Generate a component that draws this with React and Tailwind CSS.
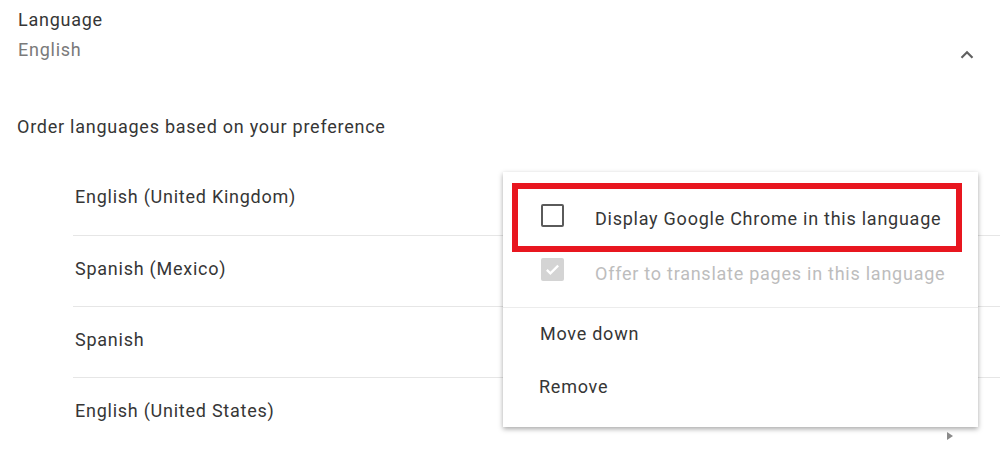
import React from 'react';

const languages = ['English (United Kingdom)', 'Spanish (Mexico)', 'Spanish', 'English (United States)'];

const App = () => {
  return (
    <div className="relative w-[1000px] h-[452px] overflow-hidden bg-white text-[18px] tracking-[0.75px] text-[#363636] font-['Roboto',sans-serif]">
      <div className="flex justify-between pl-[18px] pr-[22px] pt-[8px]">
        <div>
          <div className="leading-[24px]">Language</div>
          <div className="leading-[24px] mt-[6px] text-[#7a7a7a]">English</div>
        </div>
        <svg className="mt-[36px]" width="22" height="22" viewBox="0 0 24 24">
          <path d="M6 15l6-6 6 6" fill="none" stroke="#616161" strokeWidth="2.4" />
        </svg>
      </div>

      <div className="pl-[17px] mt-[49px] leading-[24px]">Order languages based on your preference</div>

      <div className="ml-[73px] mt-[25px]">
        {languages.map((lang, i) => (
          <div
            key={lang}
            className={`h-[71px] pl-[2px] pt-[21px] leading-[24px] ${i > 0 ? 'border-t border-[#e6e6e6]' : ''}`}
          >
            {lang}
          </div>
        ))}
      </div>

      <div className="absolute left-[503px] top-[172px] w-[475px] h-[255px] bg-white shadow-[0_2px_5px_rgba(0,0,0,0.35)]">
        <div className="flex items-center h-[86px] pt-[1px] pl-[38px]">
          <div className="w-[23px] h-[23px] border-2 border-[#5a5a5a] rounded-[2px]" />
          <span className="ml-[31px] mt-[6px]">Display Google Chrome in this language</span>
        </div>
        <div className="flex items-center h-[22px] pl-[38px]">
          <div className="flex items-center justify-center w-[23px] h-[23px] rounded-[2px] bg-[#d4d4d4]">
            <svg width="17" height="17" viewBox="0 0 24 24">
              <path d="M4 12.5l5 5L20 6.5" fill="none" stroke="#fff" strokeWidth="3.2" />
            </svg>
          </div>
          <span className="ml-[31px] mt-[8px] text-[#bdbdbd]">Offer to translate pages in this language</span>
        </div>
        <div className="mt-[27px] border-t border-[#ececec]" />
        <div className="pl-[37px] pt-[14px] leading-[24px]">Move down</div>
        <div className="pl-[36px] pt-[29px] leading-[24px]">Remove</div>

        <div className="absolute left-[9px] top-[11px] w-[450px] h-[69px] border-[6px] border-[#e8161f]" />
      </div>

      <div className="absolute left-[947px] top-[432px] w-0 h-0 border-y-[4px] border-y-transparent border-l-[6px] border-l-[#8a8a8a]" />
    </div>
  );
};

export default App;
